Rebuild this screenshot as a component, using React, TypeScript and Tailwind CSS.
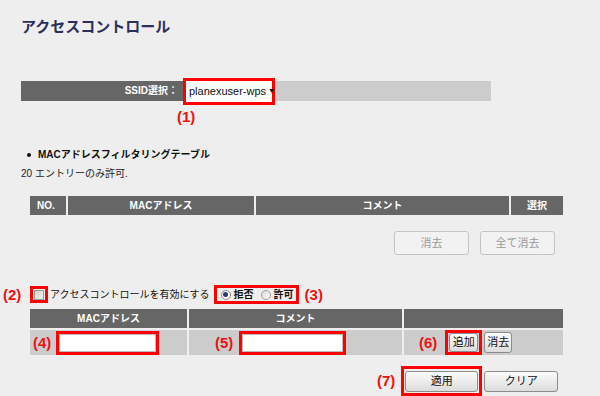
import React from 'react';

const font = "font-['Liberation_Sans','Noto_Sans_CJK_JP',sans-serif]";

function Mark({ n, className = '' }: { n: number; className?: string }) {
  return (
    <span className={`block whitespace-nowrap text-[15px] leading-[16px] font-bold text-[#ee1111] ${className}`}>
      ({n})
    </span>
  );
}

function GrayButton({ label, className = '' }: { label: string; className?: string }) {
  return (
    <div
      className={`flex items-center justify-center whitespace-nowrap rounded-[3px] border border-[#8c8c8c] bg-gradient-to-b from-[#fbfbfb] to-[#dcdcdc] text-[11px] leading-none text-[#111] ${className}`}
    >
      {label}
    </div>
  );
}

export default function App() {
  return (
    <div className={`w-[600px] h-[396px] overflow-hidden bg-[#eeeeee] leading-[14px] ${font}`}>
      <h1 className="pl-[21px] pt-[17px] text-[15px] leading-[19px] font-bold text-[#2b2f5e]">
        アクセスコントロール
      </h1>

      {/* SSID bar */}
      <div className="mt-[45px] ml-[21px] w-[470px] h-[20px] flex items-center">
        <div className="w-[162px] h-full bg-[#666666] flex items-center justify-end pr-[5px] text-[10px] font-bold text-white whitespace-nowrap">
          SSID選択：
        </div>
        <div className="flex-1 h-full bg-[#cccccc] flex items-center">
          <div className="h-[27px] w-[92px] border-[3px] border-[#ff0000] bg-white flex items-center pl-[3px] text-[11px] text-[#111] whitespace-nowrap">
            planexuser-wps
            <span className="ml-[2px] text-[7px]">▼</span>
          </div>
        </div>
      </div>
      <Mark n={1} className="ml-[177px] mt-[8px]" />

      {/* filter table */}
      <div className="mt-[23px] ml-[27px] flex items-center gap-[7px] text-[10px] leading-[14px] font-bold text-[#111] whitespace-nowrap">
        <span className="w-[4px] h-[4px] rounded-full bg-[#111]" />
        <span>MACアドレスフィルタリングテーブル</span>
      </div>
      <div className="ml-[21px] mt-[5px] text-[10px] leading-[14px] text-[#222] whitespace-nowrap">20 エントリーのみ許可.</div>

      <div className="ml-[30px] mt-[15px] w-[533px] h-[19px] grid grid-cols-[36px_186px_253px_52px] gap-x-[2px] text-[10px] font-bold text-white">
        <div className="bg-[#666666] flex items-center pl-[7px]">NO.</div>
        <div className="bg-[#666666] flex items-center justify-center">MACアドレス</div>
        <div className="bg-[#666666] flex items-center justify-center">コメント</div>
        <div className="bg-[#666666] flex items-center justify-center">選択</div>
      </div>

      <div className="mt-[16px] mr-[45px] flex justify-end gap-[11px]">
        {['消去', '全て消去'].map((t) => (
          <div
            key={t}
            className="w-[75px] h-[24px] rounded-[3px] border border-[#c4c4c4] bg-[#f2f2f2] flex items-center justify-center text-[11px] text-[#9a9a9a]"
          >
            {t}
          </div>
        ))}
      </div>

      {/* enable row */}
      <div className="mt-[30px] flex items-center h-[19px] whitespace-nowrap">
        <Mark n={2} className="ml-[3px] w-[27px]" />
        <div className="w-[18px] h-[17px] border-[3px] border-[#ff0000] flex items-center justify-center">
          <div className="w-[10px] h-[10px] border border-[#9a9a9a] bg-gradient-to-br from-[#d0d0d0] to-[#f5f5f5]" />
        </div>
        <span className="ml-[2px] text-[10px] text-[#111]">アクセスコントロールを有効にする</span>
        <div className="ml-[4px] w-[85px] h-[19px] border-[3px] border-[#ff0000] flex items-center pl-[4px] text-[10px] font-bold text-[#111]">
          <span className="w-[10px] h-[10px] rounded-full border border-[#8a8a8a] bg-white flex items-center justify-center">
            <span className="w-[5px] h-[5px] rounded-full bg-[#2c3a70]" />
          </span>
          <span className="ml-[3px]">拒否</span>
          <span className="ml-[7px] w-[10px] h-[10px] rounded-full border border-[#a0a0a0] bg-gradient-to-br from-[#d8d8d8] to-white" />
          <span className="ml-[3px]">許可</span>
        </div>
        <Mark n={3} className="ml-[6px]" />
      </div>

      {/* add table */}
      <div className="ml-[30px] mt-[5px] w-[533px] grid grid-cols-[157px_213px_159px] gap-[2px]">
        <div className="h-[19px] bg-[#666666] flex items-center justify-center text-[10px] font-bold text-white">MACアドレス</div>
        <div className="h-[19px] bg-[#666666] flex items-center justify-center text-[10px] font-bold text-white">コメント</div>
        <div className="h-[19px] bg-[#666666]" />

        <div className="h-[25px] bg-[#cccccc] flex items-center">
          <Mark n={4} className="ml-[3px]" />
          <div className="ml-[5px] w-[103px] h-[24px] border-[3px] border-[#ff0000] bg-white">
            <div className="h-full border border-[#bdbdbd]" />
          </div>
        </div>
        <div className="h-[25px] bg-[#cccccc] flex items-center">
          <Mark n={5} className="ml-[26px]" />
          <div className="ml-[6px] w-[107px] h-[24px] border-[3px] border-[#ff0000] bg-white">
            <div className="h-full border border-[#bdbdbd]" />
          </div>
        </div>
        <div className="h-[25px] bg-[#cccccc] flex items-center">
          <Mark n={6} className="ml-[15px]" />
          <div className="ml-[8px] w-[37px] h-[25px] border-[3px] border-[#ff0000] flex items-center justify-center">
            <GrayButton label="追加" className="w-[29px] h-[19px]" />
          </div>
          <GrayButton label="消去" className="ml-[2px] w-[28px] h-[21px]" />
        </div>
      </div>

      {/* apply row */}
      <div className="mt-[11px] flex items-center">
        <Mark n={7} className="ml-[377px]" />
        <div className="ml-[6px] w-[81px] h-[30px] border-[3px] border-[#ff0000] flex items-center justify-center">
          <GrayButton label="適用" className="w-[73px] h-[21px]" />
        </div>
        <GrayButton label="クリア" className="ml-[2px] w-[74px] h-[21px]" />
      </div>
    </div>
  );
}
